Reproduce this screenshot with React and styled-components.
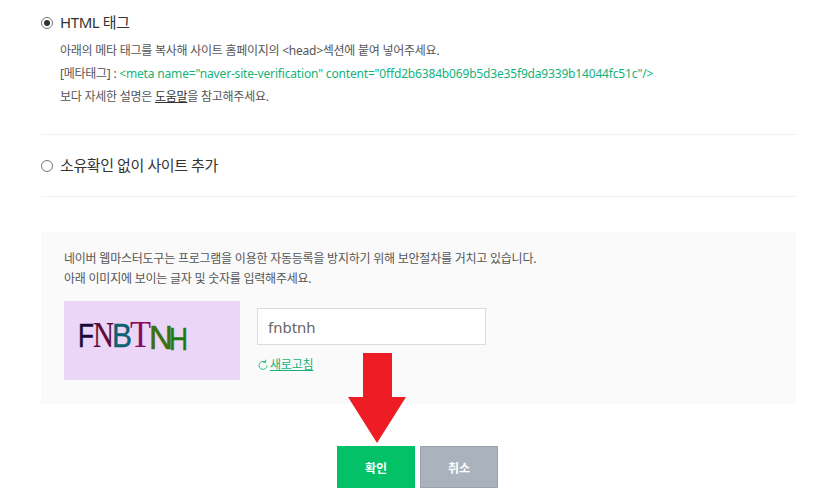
import React from "react";
import styled, { createGlobalStyle } from "styled-components";

const Global = createGlobalStyle`
  html, body { margin: 0; padding: 0; background: #fff; }
  body { font-family: "Noto Sans", "Noto Sans CJK KR", sans-serif; color: #333; overflow: hidden; }
`;
const Page = styled.div`
  position: relative;
  width: 820px;
  height: 504px;
  padding: 0 24px 0 41px;
  box-sizing: border-box;
  overflow: hidden;
`;
const Section = styled.section`
  padding-top: ${p => p.$top}px;
  height: ${p => p.$height}px;
  box-sizing: border-box;
  border-bottom: 1px solid #f1f1f1;
`;
const RadioRow = styled.label`
  display: flex;
  align-items: center;
  gap: 7px;
  height: 20px;
  font-size: 15px;
  letter-spacing: -0.4px;
  line-height: 20px;
  color: #333;
`;
const RadioText = styled.span`
  position: relative;
  top: -1px;
`;
const Radio = styled.span`
  width: 12px;
  height: 12px;
  box-sizing: border-box;
  border: 1px solid #777;
  border-radius: 50%;
  display: flex;
  align-items: center;
  justify-content: center;
  background: #fff;
  &::after {
    content: "";
    display: ${p => (p.$on ? "block" : "none")};
    width: 6px;
    height: 6px;
    border-radius: 50%;
    background: #333;
  }
`;
const Help = styled.div`
  margin: 6px 0 0 19px;
  font-size: 12px;
  line-height: 23px;
  letter-spacing: -0.25px;
  color: #555;
`;
const Line = styled.div`
  white-space: nowrap;
`;
const Code = styled.span`
  color: #13b27a;
  letter-spacing: -0.17px;
`;
const HelpLink = styled.span`
  color: #333;
  text-decoration: underline;
`;
const Captcha = styled.div`
  margin-top: 35px;
  height: 172px;
  background: #fafafa;
  padding: 17px 23px 0;
  box-sizing: border-box;
`;
const Notice = styled.p`
  margin: 0;
  font-size: 12px;
  line-height: 20px;
  letter-spacing: -0.23px;
  color: #555;
`;
const CaptchaRow = styled.div`
  display: flex;
  gap: 17px;
  margin-top: 12px;
`;
const CaptchaImage = styled.svg`
  width: 176px;
  height: 79px;
  flex: none;
  display: block;
`;
const Field = styled.div`
  padding-top: 7px;
`;
const Input = styled.input`
  display: block;
  width: 229px;
  height: 37px;
  box-sizing: border-box;
  border: 1px solid #dcdcdc;
  background: #fff;
  padding: 0 10px;
  font-family: "Noto Sans", sans-serif;
  font-size: 15px;
  color: #666;
  outline: none;
`;
const Refresh = styled.div`
  display: flex;
  align-items: center;
  gap: 1px;
  margin-top: 11px;
  font-size: 12px;
  line-height: 18px;
  letter-spacing: -0.2px;
  color: #13b27a;
  text-decoration: underline;
`;
const Buttons = styled.div`
  display: flex;
  justify-content: flex-start;
  gap: 5px;
  margin: 42px 0 0 296px;
`;
const Button = styled.button`
  width: 78px;
  height: 42px;
  border: 1px solid ${p => (p.$primary ? "#03c167" : "#9aa3ad")};
  background: ${p => (p.$primary ? "#03c167" : "#aab3bd")};
  color: #fff;
  font-family: "Noto Sans CJK KR", sans-serif;
  font-size: 12px;
  font-weight: 700;
  padding: 0;
`;
const Arrow = styled.svg`
  position: absolute;
  left: 347px;
  top: 352px;
  width: 60px;
  height: 92px;
`;

const letters = [
  ["F", 14, 46, 33, 16, "Liberation Sans", "#1a0a3c", 0.5],
  ["N", 29, 46, 36, 21, "Liberation Serif", "#5e0a3a", 0.2],
  ["B", 48, 46, 33, 20, "Liberation Sans", "#0c6070", 0.4],
  ["T", 66, 46, 38, 21, "Liberation Serif", "#8a0a60", 0],
  ["N", 85, 48, 33, 24, "Liberation Sans", "#3a7010", 0.6],
  ["H", 105, 49, 31, 19, "Liberation Sans", "#1d7a10", 0.4],
];

export default function App() {
  return (
    <Page>
      <Global />
      <Section $top={13} $height={135}>
        <RadioRow><Radio $on /><RadioText>HTML 태그</RadioText></RadioRow>
        <Help>
          <Line>아래의 메타 태그를 복사해 사이트 홈페이지의 &lt;head&gt;섹션에 붙여 넣어주세요.</Line>
          <Line>[메타태그] : <Code>&lt;meta name="naver-site-verification" content="0ffd2b6384b069b5d3e35f9da9339b14044fc51c"/&gt;</Code></Line>
          <Line>보다 자세한 설명은 <HelpLink>도움말</HelpLink>을 참고해주세요.</Line>
        </Help>
      </Section>
      <Section $top={21} $height={62}>
        <RadioRow><Radio /><RadioText>소유확인 없이 사이트 추가</RadioText></RadioRow>
      </Section>
      <Captcha>
        <Notice>네이버 웹마스터도구는 프로그램을 이용한 자동등록을 방지하기 위해 보안절차를 거치고 있습니다.<br />아래 이미지에 보이는 글자 및 숫자를 입력해주세요.</Notice>
        <CaptchaRow>
          <CaptchaImage viewBox="0 0 176 79">
            <rect width="176" height="79" fill="#ecd6f7" />
            {letters.map(([c, x, y, size, w, font, fill, sw], i) => (
              <text key={i} x={x} y={y} fontFamily={font} fontSize={size} fill={fill} stroke={fill} strokeWidth={sw} textLength={w} lengthAdjust="spacingAndGlyphs">{c}</text>
            ))}
          </CaptchaImage>
          <Field>
            <Input defaultValue="fnbtnh" />
            <Refresh>
              <svg width="12" height="12" viewBox="0 0 24 24" fill="none" stroke="#13b27a" strokeWidth="1.8"><path d="M20 13a8 8 0 1 1-3.2-6.6" /><path d="M17.5 1.5v5.2h-5.2" /></svg>
              <span>새로고침</span>
            </Refresh>
          </Field>
        </CaptchaRow>
      </Captcha>
      <Buttons>
        <Button $primary>확인</Button>
        <Button>취소</Button>
      </Buttons>
      <Arrow viewBox="0 0 60 92">
        <polygon points="16,1 45,1 45,45 59,45 30,91 1,45 16,45" fill="#ee1c25" />
      </Arrow>
    </Page>
  );
}
